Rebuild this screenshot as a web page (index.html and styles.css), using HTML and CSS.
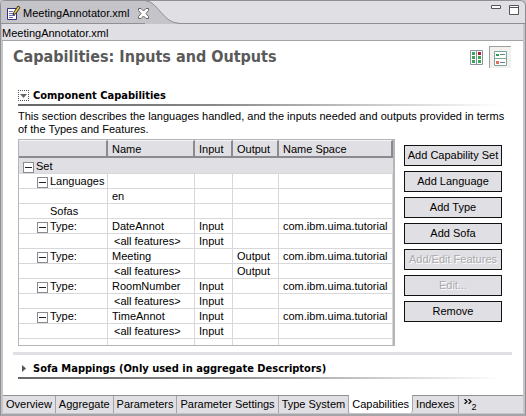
FILE: index.html
```html
<!DOCTYPE html>
<html lang="en">
<head>
<meta charset="utf-8">
<title>MeetingAnnotator.xml</title>
<link rel="stylesheet" href="styles.css">
</head>
<body>
<div class="editor">
  <header class="titlebar">
    <div class="file-tab">
      <svg class="file-icon" width="14" height="16" viewBox="0 0 14 16" aria-hidden="true">
        <path d="M.5 3.500h9v11h-9z" fill="#fff" stroke="#33337a"/>
        <path d="M2 6.500h4M2 8.500h4M2 10.500h6M2 12.500h4" stroke="#6a6ab8"/>
        <path d="M6 10l1-3 4-6 2 1.500-4 6z" fill="#e8c840" stroke="#222" stroke-width=".9"/>
      </svg>
      <span>MeetingAnnotator.xml</span>
      <button class="icon-button" aria-label="Close">
        <svg width="11" height="11" viewBox="0 0 11 11"><path d="M.5.5h2.500l2.500 2.500L8 .5h2.500v2L8 5.500l2.500 3v2H8L5.500 8 3 10.500H.5v-2l2.500-3-2.500-3z" fill="#fff" stroke="#666"/></svg>
      </button>
    </div>
    <svg class="tab-curve" width="40" height="24" viewBox="0 0 40 24" aria-hidden="true">
      <path d="M0 0C14 2 17 23 35 23.500H40V24H0z" fill="#c5c4c9"/>
      <path d="M0 .5C14 2 17 23 35 23.500h5" fill="none" stroke="#8f8f94"/>
    </svg>
    <div class="window-controls">
      <button class="icon-button" aria-label="Minimize"><svg width="10" height="10" viewBox="0 0 10 10"><path d="M.5.5h9v3h-9z" fill="#fff" stroke="#555"/></svg></button>
      <button class="icon-button" aria-label="Maximize"><svg width="10" height="10" viewBox="0 0 10 10"><path d="M.5.5h9v9h-9zM0 2.500h10" fill="#fff" stroke="#555"/></svg></button>
    </div>
  </header>
  <div class="breadcrumb">MeetingAnnotator.xml</div>
  <main class="form">
    <div class="heading">
      <h1>Capabilities: Inputs and Outputs</h1>
      <div class="layout-tools">
        <button class="icon-button" aria-label="Horizontal layout">
          <svg width="13" height="15" viewBox="0 0 13 15"><path d="M.5.5h12v14H.5zM6.500 0v15" fill="#fff" stroke="#8b93a0"/><path d="M2 2h3v3H2zM2 6h3v3H2zM2 10h3v3H2zM8 6h3v3H8zM8 10h3v3H8z" fill="#3aa655"/><path d="M8 2h3v3H8z" fill="#b0203c"/></svg>
        </button>
        <button class="icon-button pressed" aria-label="Vertical layout" aria-pressed="true">
          <svg width="13" height="15" viewBox="0 0 13 15"><path d="M.5.5h12v14H.5zM0 7.500h13" fill="#fff" stroke="#7fa59a"/><path d="M2 3h3v2H2z" fill="#2f9a50"/><path d="M2 10h3v3H2z" fill="#e0705c"/><path d="M6 3.500h5M6 11.500h5" stroke="#667a9a"/></svg>
        </button>
      </div>
    </div>
    <section class="capabilities">
      <h2><button class="twistie focused" aria-label="Collapse" aria-expanded="true"><svg width="7" height="4" viewBox="0 0 7 4"><path d="M0 0h7L3.500 4z" fill="#666"/></svg></button>Component Capabilities</h2>
      <p>This section describes the languages handled, and the inputs needed and outputs provided in terms of the Types and Features.</p>
      <div class="columns">
        <table>
          <colgroup><col class="c-tree"><col class="c-name"><col class="c-in"><col class="c-out"><col></colgroup>
          <thead><tr><th></th><th>Name</th><th>Input</th><th>Output</th><th>Name Space</th></tr></thead>
          <tbody>
            <tr class="selected"><td colspan="5" class="root"><button class="toggle" aria-label="Collapse"></button>Set</td></tr>
            <tr><td class="child"><button class="toggle" aria-label="Collapse"></button>Languages</td><td></td><td></td><td></td><td></td></tr>
            <tr><td></td><td>en</td><td></td><td></td><td></td></tr>
            <tr><td class="leaf">Sofas</td><td></td><td></td><td></td><td></td></tr>
            <tr><td class="child"><button class="toggle" aria-label="Collapse"></button>Type:</td><td>DateAnnot</td><td>Input</td><td></td><td>com.ibm.uima.tutorial</td></tr>
            <tr><td></td><td class="feature">&lt;all features&gt;</td><td>Input</td><td></td><td></td></tr>
            <tr><td class="child"><button class="toggle" aria-label="Collapse"></button>Type:</td><td>Meeting</td><td></td><td>Output</td><td>com.ibm.uima.tutorial</td></tr>
            <tr><td></td><td class="feature">&lt;all features&gt;</td><td></td><td>Output</td><td></td></tr>
            <tr><td class="child"><button class="toggle" aria-label="Collapse"></button>Type:</td><td>RoomNumber</td><td>Input</td><td></td><td>com.ibm.uima.tutorial</td></tr>
            <tr><td></td><td class="feature">&lt;all features&gt;</td><td>Input</td><td></td><td></td></tr>
            <tr><td class="child"><button class="toggle" aria-label="Collapse"></button>Type:</td><td>TimeAnnot</td><td>Input</td><td></td><td>com.ibm.uima.tutorial</td></tr>
            <tr><td></td><td class="feature">&lt;all features&gt;</td><td>Input</td><td></td><td></td></tr>
            <tr class="filler"><td></td><td></td><td></td><td></td><td></td></tr>
          </tbody>
        </table>
        <div class="actions">
          <button>Add Capability Set</button>
          <button>Add Language</button>
          <button>Add Type</button>
          <button>Add Sofa</button>
          <button disabled>Add/Edit Features</button>
          <button disabled>Edit...</button>
          <button>Remove</button>
        </div>
      </div>
    </section>
    <section class="mappings">
      <h2><button class="twistie" aria-label="Expand" aria-expanded="false"><svg width="4" height="7" viewBox="0 0 4 7"><path d="M0 0v7L4 3.500z" fill="#555"/></svg></button>Sofa Mappings (Only used in aggregate Descriptors)</h2>
    </section>
  </main>
  <nav class="pages">
    <a href="#">Overview</a>
    <a href="#">Aggregate</a>
    <a href="#">Parameters</a>
    <a href="#">Parameter Settings</a>
    <a href="#">Type System</a>
    <a href="#" class="active" aria-current="page">Capabilities</a>
    <a href="#">Indexes</a>
    <button class="more" aria-label="2 more pages"><svg width="8" height="5" viewBox="0 0 8 5"><path d="M.5 0L3 2.500.5 5M4.500 0L7 2.500 4.500 5" fill="none" stroke="#111" stroke-width="1.300"/></svg><span>2</span></button>
  </nav>
</div>
</body>
</html>
```
FILE: styles.css
```css
* { box-sizing: border-box; }

body {
  margin: 0;
  background: #c5c4c9;
  color: #000;
  font: 11px/13px "Liberation Sans", Arial, sans-serif;
}

button {
  margin: 0;
  padding: 0;
  border: 0;
  background: none;
  color: inherit;
  font: inherit;
}

svg { display: block; }

.editor {
  display: flex;
  flex-direction: column;
  min-height: 100vh;
  border: 1px solid #8f8f94;
  border-bottom: 2px solid #a5a4a9;
  border-radius: 5px 6px 0 0;
  overflow: hidden;
}

.titlebar {
  display: flex;
  height: 24px;
  margin-top: -1px;
  border-top: 1px solid #8f8f94;
  border-bottom: 1px solid #8f8f94;
  background: #e0dfe3;
}

.file-tab {
  display: flex;
  align-items: center;
  gap: 9px;
  padding: 2px 0 0 6px;
  background: #c5c4c9;
}

.file-icon { margin-right: -7px; }

.file-tab .icon-button { position: relative; }

.tab-curve { margin: -1px 0 0 -4px; }

.window-controls {
  display: flex;
  gap: 8px;
  margin-left: auto;
  padding: 4px 6px 0 0;
}

.window-controls .icon-button { height: 10px; }

.breadcrumb {
  height: 17px;
  margin: 0 2px 0 1px;
  padding-top: 3px;
  border-bottom: 1px solid #a5a4a9;
  background: #e0dfe3;
}

.form {
  flex: 1;
  margin: 0 2px;
  background: #fff;
}

.heading {
  display: flex;
  justify-content: space-between;
  height: 46px;
  padding: 5px 12px 0 10px;
}

h1,
h2 {
  margin: 0;
  font-family: "DejaVu Sans Condensed", "DejaVu Sans", sans-serif;
}

h1 {
  color: #5a5a5a;
  font-size: 16px;
  line-height: 22px;
}

.layout-tools {
  display: flex;
  align-items: flex-start;
  gap: 6px;
}

.layout-tools .icon-button { padding-top: 4px; }

.layout-tools .pressed {
  padding: 4px 4px 2px;
  border: solid #a0a0a0;
  border-width: 1px 0 0 1px;
  background: #f1f1ee;
}

section { padding: 0 21px 0 15px; }

h2 {
  display: flex;
  align-items: center;
  gap: 4px;
  height: 19px;
  border-bottom: 2px solid;
  border-image: linear-gradient(to right, #666, #888 40%, #fff) 1;
  font-size: 11px;
}

.twistie {
  display: grid;
  place-items: center;
  width: 11px;
  height: 11px;
}

.twistie.focused { outline: 1px dotted #555; outline-offset: -1px; }

.capabilities p { margin: 4px -10px 3px 0; }

.columns {
  display: flex;
  gap: 9px;
}

table {
  flex: 1;
  width: 100%;
  border: 1px solid #b5b4b9;
  border-right-width: 2px;
  border-collapse: separate;
  border-spacing: 0;
  table-layout: fixed;
}

.c-tree { width: 89px; }
.c-name { width: 87px; }
.c-in { width: 38px; }
.c-out { width: 46px; }

th {
  height: 18px;
  padding: 1px 4px 0;
  border: solid;
  border-width: 1px 2px 2px 0;
  border-color: #f5f5f7 #8b8a90 #8b8a90;
  background: #e0dfe3;
  font-weight: normal;
  text-align: left;
  white-space: nowrap;
}

td {
  height: 15px;
  padding: 0 0 0 4px;
  border: solid #d8d7da;
  border-width: 0 1px 1px 0;
  line-height: 14px;
  white-space: nowrap;
}

td.feature { padding-left: 6px; }
td.child { padding-left: 18px; }
td.leaf { padding-left: 31px; }
td.root { padding-left: 4px; }

.selected td {
  height: 16px;
  border-right: 0;
  background: #e0dfe3;
}

.filler td { height: 6px; border-bottom: 0; }

.toggle {
  width: 11px;
  height: 11px;
  margin-right: 2px;
  border: 1px solid #8b8a90;
  background: linear-gradient(#222, #222) center / 7px 1px no-repeat #fff;
  vertical-align: -2px;
}

.actions {
  display: flex;
  flex-direction: column;
  gap: 5px;
  width: 98px;
  padding-top: 6px;
}

.actions button {
  height: 21px;
  border: 1px solid #111;
  background: #e0dfe3;
  white-space: nowrap;
}

.actions button:disabled {
  color: #aaa9ad;
  text-shadow: 1px 1px #fff;
}

.mappings { padding-top: 5px; }

.capabilities::after {
  content: "";
  display: block;
  height: 3px;
  margin: 6px -10px 0 -5px;
  background: #e0dfe3;
}

.pages {
  display: flex;
  height: 18px;
  margin: 0 2px 1px;
  border-top: 1px solid #8f8f94;
  background: #e0dfe3;
}

.pages a {
  padding: 2px 3px 0;
  border-right: 1px solid #a5a4a9;
  color: inherit;
  text-decoration: none;
  white-space: nowrap;
}

.pages .active {
  margin-top: -1px;
  padding-top: 3px;
  border-radius: 0 0 3px 3px;
  background: #fff;
}

.more {
  display: flex;
  align-items: flex-start;
  padding: 3px 0 0 5px;
}

.more span { font-size: 9px; padding-top: 2px; }
```
